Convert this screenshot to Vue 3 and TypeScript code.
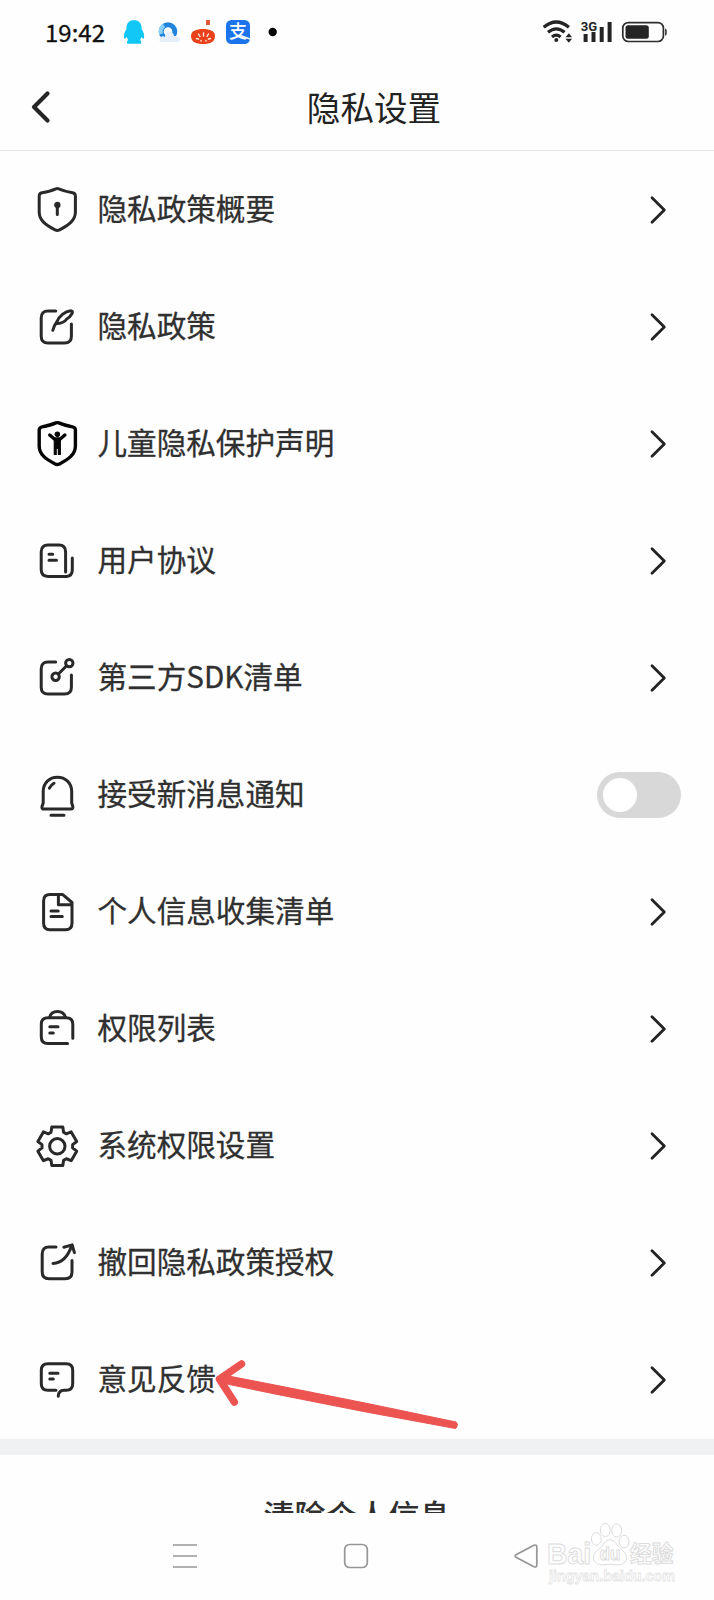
<script setup lang="ts">
import { ref } from 'vue'

interface Shape {
  d: string
  fill?: boolean
}
interface Item {
  label: string
  shapes: Shape[]
  toggle?: boolean
  dark?: boolean
}

const circle = (x: number, y: number, r: number): string =>
  `M${x - r} ${y}a${r} ${r} 0 1 0 ${2 * r} 0a${r} ${r} 0 1 0 ${-2 * r} 0Z`

function gear(cx: number, cy: number): string {
  const points: string[] = []
  for (let i = 0; i < 6; i++) {
    const base = i * 60 - 90
    for (const [angle, r] of [[-24, 15.4], [-16, 20], [16, 20], [24, 15.4]]) {
      const t = ((base + angle) * Math.PI) / 180
      points.push(`${(cx + r * Math.cos(t)).toFixed(2)} ${(cy + r * Math.sin(t)).toFixed(2)}`)
    }
  }
  return `M${points.join('L')}Z`
}

const shield =
  'M22.8 2.9Q24.3 2.3 25.8 2.9C30 4.8 34.5 5.9 39.5 6.8Q42.4 7.4 42.4 10V26C42.4 34.5 35.5 39.3 26.5 43.9Q24.3 45 22.1 43.9C13 39.3 6.2 34.5 6.2 26V10Q6.2 7.4 9.1 6.8C14 5.9 18.6 4.8 22.8 2.9Z'
const openSquare = 'M22.7 8.1H15Q8.2 8.1 8.2 15V33.2Q8.2 40 15 40H31.5Q38.4 40 38.4 33.2V21'

const items = ref<Item[]>([
  {
    label: '隐私政策概要',
    shapes: [{ d: shield }, { d: circle(24.3, 19, 2.2), fill: true }, { d: 'M24.3 20V28.5' }],
  },
  {
    label: '隐私政策',
    shapes: [
      { d: openSquare },
      { d: 'M19.8 27.3C20.6 24.3 21.8 21.8 23.6 19.2C26 13 32 8.3 37.7 7.7Q40 7.8 39.2 10.2C37.6 13 36.2 14.8 33.8 16C32 18.600 29 20.200 24.500 20.500' },
    ],
  },
  {
    label: '儿童隐私保护声明',
    dark: true,
    shapes: [
      { d: shield },
      { d: circle(24.3, 14.2, 2.2), fill: true },
      { d: 'M16.7 15L21.4 19H27.2L31.9 15' },
      { d: 'M21.3 19H27.3V34.5H25.4V28.5H23.2V34.5H21.3Z', fill: true },
    ],
  },
  {
    label: '用户协议',
    shapes: [
      { d: 'M32.6 35V15Q32.6 8 26 8H15Q8.2 8 8.2 15V32.5Q8.2 39.4 15 39.4H33.5Q39.3 39 39.3 33V21' },
      { d: 'M16 17.2H19.7M16 23.3H23.5' },
    ],
  },
  {
    label: '第三方SDK清单',
    shapes: [{ d: openSquare }, { d: circle(22.6, 22.8, 3.7) }, { d: circle(36.3, 9.1, 3.7) }, { d: 'M25.4 20L33.6 11.8' }],
  },
  {
    label: '接受新消息通知',
    toggle: true,
    shapes: [
      { d: 'M10.2 32V20.5C10.2 11.8 16.5 6.3 24.4 6.3S38.7 11.8 38.7 20.5V32L39.8 35.5Q40.2 38.1 37.8 38.1H11.1Q8.4 38.1 9 35.5Z' },
      { d: 'M16.4 17.1Q18 14 21 12.3M18 44.3H31' },
    ],
  },
  {
    label: '个人信息收集清单',
    shapes: [
      { d: 'M29.8 6.6H17Q10.6 6.6 10.6 13V35.2Q10.6 41.7 17 41.7H32.5Q39 41.7 39 35.2V14.5Z' },
      { d: 'M25.4 7V16.8H38.5M18 22.9H25.2M18 28.6H29.3' },
    ],
  },
  {
    label: '权限列表',
    shapes: [
      { d: 'M34.5 38.6H15Q8.3 38.6 8.3 32V19.3Q8.3 12.8 15 12.8H33.2Q39.8 12.8 39.8 19.3V33.2' },
      { d: 'M16.5 12.5C18.5 4.5 30.5 4.5 32.5 12.5M16.8 21.7H25M16.8 28H20.3' },
    ],
  },
  { label: '系统权限设置', shapes: [{ d: gear(24.3, 24.3) }, { d: circle(24.3, 24.3, 7.7) }] },
  {
    label: '撤回隐私政策授权',
    shapes: [
      { d: 'M23 8H16Q9.2 8 9.2 14.8V33Q9.2 39.7 16 39.7H32.3Q39 39.7 39 33V21.5' },
      { d: 'M20 24.4C29 24 35 18 38.8 6.3M30.8 8.2L39.2 5.9L41.4 13.6' },
    ],
  },
  {
    label: '意见反馈',
    shapes: [
      { d: 'M23 34.3H15Q8.3 34.3 8.3 27.8V14.2Q8.3 7.7 15 7.7H33.1Q39.7 7.7 39.7 14.2V27.8Q39.7 34.3 33.1 34.3H31Q25.5 34.5 25.3 40.2' },
      { d: 'M16.8 17.2H25M16.8 23.1H20.3' },
    ],
  },
])

const enabled = ref(false)
</script>

<template>
  <main class="screen">
    <div class="status">
      <span class="clock">19:42</span>
      <svg class="apps" width="160" height="30" viewBox="120 17 160 30">
        <path fill="#10c7f6" d="M134 20c-5 0-7.800 3.600-7.500 9-2 3-3 6-2.300 9.200q.7 1.300 2.500-1.200l1.400 3q-1.600 1.200-1 3.800h14q.6-2.600-1-3.800l1.400-3q1.800 2.500 2.500 1.200c.6-3-.4-6.200-2.400-9.200.3-5.400-2.600-9-7.600-9z" />
        <circle cx="168" cy="31.500" r="6.800" fill="none" stroke="#2184dc" stroke-width="5" />
        <path fill="none" stroke="#8bd0f5" stroke-width="4" d="M161 34a7.500 7.500 0 0 1 3-8.500" />
        <path fill="#e6eef9" d="M160 42c-2-5 3-7 5-5 0-7 8-8 9-1 3.500-.5 6 1.500 6 3.500q0 2.500-3 2.500h-13z" />
        <path fill="#de5a38" d="M206 20h4v5h-4z" />
        <path fill="#e8411c" d="M191 36c0-5 5-7 12-7s12 2 12 7c0 6-5 8-12 8s-12-2-12-8z" />
        <path stroke="#fff0dd" stroke-width="1.400" stroke-linecap="round" d="M203.500 33v3M198.500 34l1.500 2.500M208.500 34l-1.500 2.500M196.500 38.500l2 .5M210.500 38.500l-2 .5M201 40.500v.5M206 40.500v.5" />
        <rect x="226" y="20" width="24" height="24" rx="5.500" fill="#1b74ec" />
        <text class="pay" x="238" y="37.500" text-anchor="middle">支</text>
        <path d="M240 35.500q5 1.500 10 3.500" fill="none" stroke="#fff" stroke-width="1.800" />
        <circle cx="272.700" cy="32" r="4.200" fill="#050505" />
      </svg>
      <svg class="signals" width="130" height="30" viewBox="540 17 130 30">
        <g fill="none" stroke="#242424" stroke-width="3.200">
          <path d="M543.700 27.300q12.600-10.600 25.200 0M548 32.300q8.300-6.800 16.600 0" />
          <path d="M552 37q4.300-3.600 8.600 0" />
        </g>
        <circle cx="556.300" cy="40" r="2" fill="#242424" />
        <path fill="#242424" d="M565.500 37.200l3.300-4 3.300 4zM565.500 38.800l3.300 4 3.300-4zM583.600 34h4v8h-4zM591.500 32h4v10h-4zM599.700 27h4v15h-4zM607.600 22h4v20h-4z" />
        <text class="net" x="580.800" y="31">3G</text>
        <rect x="622.800" y="22.600" width="40.600" height="18.900" rx="5.500" fill="none" stroke="#2c2c2c" stroke-width="1.700" />
        <rect x="625.500" y="25.200" width="23.300" height="13.600" rx="2.500" fill="#242424" />
        <path fill="#444" d="M665 28.500q1.800.5 1.800 2v3.200q0 1.500-1.800 2z" />
      </svg>
    </div>

    <header class="header">
      <svg class="back" width="24" height="40" viewBox="0 0 24 40">
        <path d="M19.500 6.500L6 20L19.500 33.500" />
      </svg>
      <h1>隐私设置</h1>
    </header>

    <ul class="list">
      <li v-for="item in items" :key="item.label" class="row">
        <svg class="icon" :class="{ dark: item.dark }" width="48" height="48" viewBox="0 0 48 48">
          <path v-for="(shape, i) in item.shapes" :key="i" :d="shape.d" :class="{ solid: shape.fill }" />
        </svg>
        <span class="label">{{ item.label }}</span>
        <button v-if="item.toggle" class="toggle" :class="{ on: enabled }" aria-label="接受新消息通知" @click="enabled = !enabled">
          <span class="knob"></span>
        </button>
        <svg v-else class="chevron" width="20" height="30" viewBox="0 0 20 30">
          <path d="M4 2.700L16.300 15L4 27.300" />
        </svg>
      </li>
    </ul>

    <section class="clear"><span>清除个人信息</span></section>

    <nav class="nav">
      <svg width="26" height="28" viewBox="0 0 26 28"><path d="M1 3H25M1 14H25M1 25H25" /></svg>
      <svg width="26" height="28" viewBox="0 0 26 28"><rect x="1.700" y="2.500" width="22.600" height="23" rx="5" /></svg>
      <svg width="26" height="28" viewBox="0 0 26 28"><path d="M21 3.300L3 12.700Q1.300 14 3 15.300L21 24.700Q23.800 25.700 23.800 23V5Q23.800 2.300 21 3.300Z" /></svg>
    </nav>

    <svg class="arrow" width="260" height="80" viewBox="205 1355 260 80">
      <path d="M241.500 1364L219.500 1379.200L234.300 1402" />
      <path class="shaft" d="M218 1378.500L231 1376.500L280 1386L370 1404L456 1422Q459 1425 455.500 1428.500L366 1412L275 1394L222 1383Z" />
    </svg>

    <svg class="watermark" width="140" height="70" viewBox="540 1520 140 70">
      <text class="brand" x="547" y="1563.500" textLength="44" lengthAdjust="spacingAndGlyphs">Bai</text>
      <ellipse cx="596.300" cy="1539" rx="4.900" ry="6.300" />
      <ellipse cx="605.300" cy="1530" rx="4.900" ry="6.600" />
      <ellipse cx="616.700" cy="1530.500" rx="4.900" ry="6.600" />
      <ellipse cx="624" cy="1541.500" rx="4.900" ry="6.300" />
      <path d="M610 1539.800c-5 0-6.500 5-9 7.500-4 3.500-8.500 6.500-7.500 11.500 1.500 6 7 6.500 11.500 5.800q5-.7 10 0c4.500.7 10 .2 11.300-5.800 1-5-3.500-8-7-11.500-2.500-2.500-4.300-7.500-9.300-7.500z" />
      <text class="du" x="599.500" y="1560" textLength="21" lengthAdjust="spacingAndGlyphs">du</text>
      <text class="cn" x="630" y="1561.500" textLength="43.500" lengthAdjust="spacingAndGlyphs">经验</text>
      <text class="url" x="549" y="1581" textLength="126" lengthAdjust="spacingAndGlyphs">jingyan.baidu.com</text>
    </svg>
  </main>
</template>

<style>
body {
  background: #fefefe;
}
</style>

<style scoped>
.screen {
  position: relative;
  display: flex;
  flex-direction: column;
  width: 714px;
  height: 1600px;
  overflow: hidden;
  background: #fefefe;
  color: #303030;
  font-family: "Noto Sans CJK SC", sans-serif;
}
.status {
  display: flex;
  align-items: center;
  flex: none;
  height: 64px;
  padding-left: 45px;
}
.clock {
  width: 75px;
  margin-top: -1px;
  color: #111;
  font-size: 24px;
  line-height: 30px;
  -webkit-text-stroke: 0.300px #111;
}
.apps {
  flex: none;
}
.signals {
  flex: none;
  margin-left: 260px;
}
.pay {
  fill: #fff;
  font-size: 18px;
  font-weight: 500;
}
.net {
  fill: #242424;
  font: bold 13px Roboto, sans-serif;
}
.header {
  display: grid;
  grid-template-columns: 24px 1fr 24px;
  align-items: center;
  box-sizing: border-box;
  flex: none;
  height: 87px;
  padding: 0 0 0 28px;
  border-bottom: 1px solid #e6e6e6;
}
.back path {
  fill: none;
  stroke: #252525;
  stroke-width: 4.200;
  stroke-linecap: round;
  stroke-linejoin: round;
}
h1 {
  margin: 0 0 0 6px;
  text-align: center;
  font-size: 33.600px;
  line-height: 44px;
  font-weight: 400;
  color: #222;
}
.list {
  flex: none;
  margin: 0;
  padding: 0;
  list-style: none;
}
.row {
  display: flex;
  align-items: center;
  height: 117.100px;
  padding: 0 46px 0 33px;
}
.icon path {
  fill: none;
  stroke: #292929;
  stroke-width: 3;
  stroke-linecap: round;
  stroke-linejoin: round;
}
.icon .solid {
  fill: #292929;
  stroke-width: 2;
}
.dark path {
  stroke: #050505;
  stroke-width: 3.400;
}
.dark .solid {
  fill: #050505;
  stroke-width: 1.200;
}
.label {
  flex: 1;
  margin-top: -4px;
  padding-left: 16.500px;
  font-size: 29.600px;
  line-height: 44px;
  -webkit-text-stroke: 0.300px #303030;
}
.chevron path {
  fill: none;
  stroke: #222;
  stroke-width: 2.800;
  stroke-linecap: round;
  stroke-linejoin: round;
}
.toggle {
  display: flex;
  align-items: center;
  width: 84px;
  height: 46px;
  margin-right: -13px;
  padding: 0 6px;
  border: 0;
  border-radius: 23px;
  background: #d8d8d8;
}
.toggle.on {
  justify-content: flex-end;
  background: #35c759;
}
.knob {
  width: 34px;
  height: 34px;
  border-radius: 50%;
  background: #fff;
}
.clear {
  box-sizing: border-box;
  flex: none;
  height: 73.500px;
  padding-top: 36px;
  overflow: hidden;
  border-top: 16px solid #f0f1f2;
  text-align: center;
  font-size: 31.200px;
  line-height: 46px;
  font-weight: 500;
}
.nav {
  display: flex;
  justify-content: space-between;
  flex: 1;
  padding: 29.700px 175px 0 172px;
}
.nav path,
.nav rect {
  fill: none;
  stroke: #969696;
  stroke-width: 1.700;
}
.arrow {
  position: absolute;
  left: 205px;
  top: 1355px;
}
.arrow path {
  fill: none;
  stroke: #eb5450;
  stroke-width: 7.500;
  stroke-linecap: round;
  stroke-linejoin: round;
}
.arrow .shaft {
  fill: #eb5450;
  stroke-width: 1;
}
.watermark {
  position: absolute;
  left: 540px;
  top: 1520px;
  fill: #fff;
  stroke: #dcdcdc;
  stroke-width: 1;
}
.brand,
.du,
.cn,
.url {
  font-family: "Liberation Sans", "Noto Sans CJK SC", sans-serif;
  font-weight: 700;
}
.brand {
  font-size: 30px;
}
.du {
  font-size: 19px;
}
.cn {
  font-size: 22.500px;
}
.url {
  stroke: #e4e4e4;
  stroke-width: 0.800;
  font-size: 15.500px;
}
</style>
